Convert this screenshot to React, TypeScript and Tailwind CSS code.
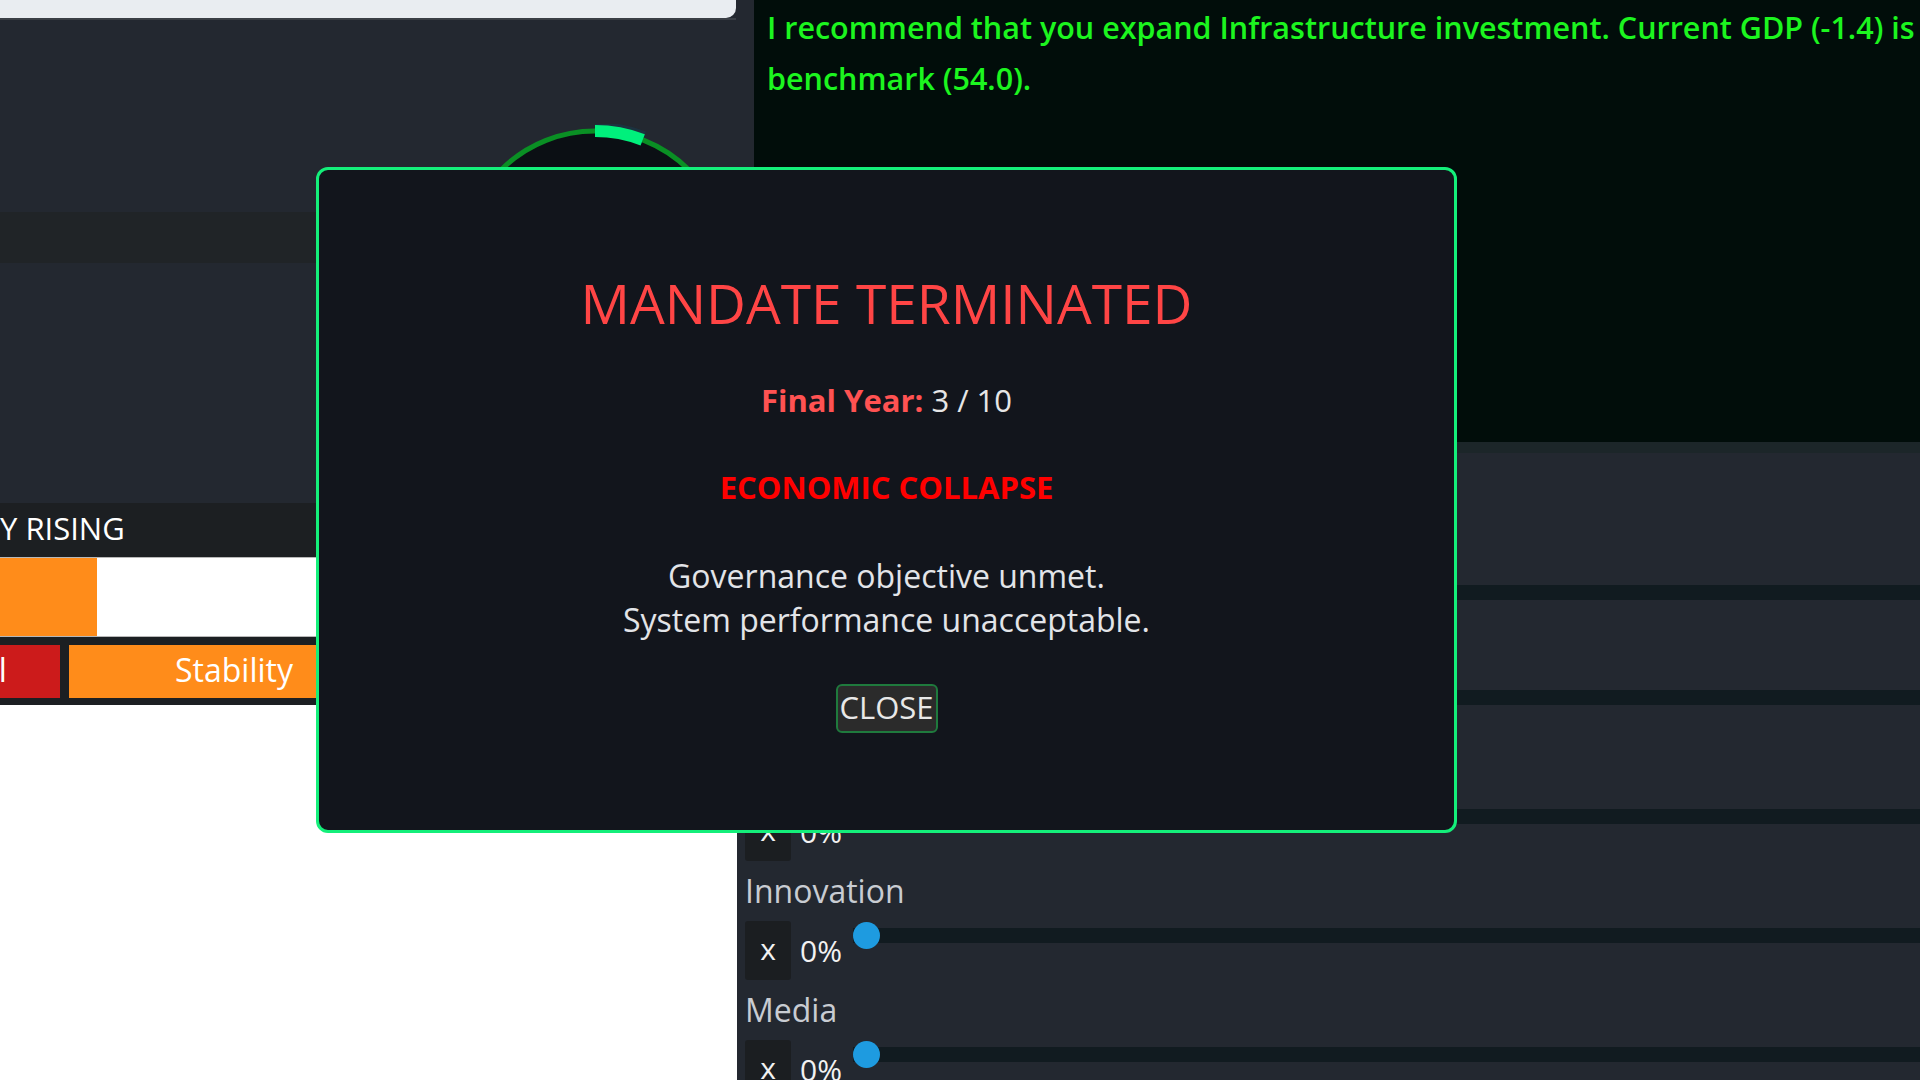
import clsx from "clsx";

interface SliderProps {
  label: string;
  short?: boolean;
}

function PolicySlider({ label, short }: SliderProps) {
  return (
    <div className="flex flex-col">
      <div className="h-[40px] leading-[40px] text-[32px] text-[#c8ccd2]">{label}</div>
      <div className={clsx("mt-[10px] mb-[10px] flex items-start", short ? "h-[45px]" : "h-[59px]")}>
        <div className="w-[46px] h-full flex items-center justify-center bg-[#1b1e21] rounded-[3px] text-[30px] leading-none text-[#f2f2f2] pb-[4px]">
          x
        </div>
        <div className="h-full flex items-center ml-[9px] text-[30px] leading-none text-[#f2f2f2]">0%</div>
        {/* track */}
        <div className="relative flex-1 ml-[11px] h-[29px] flex items-center">
          <div className="w-full h-[15px] bg-[#111b20]" />
          <div className="absolute left-0 top-[1px] w-[27px] h-[27px] rounded-full bg-[#1e9be0]" />
        </div>
      </div>
    </div>
  );
}

function Gauge() {
  return (
    <svg
      className="absolute left-[455px] top-[124px] w-[280px] h-[280px]"
      viewBox="0 0 280 280"
      fill="none"
    >
      <circle cx="140" cy="140" r="133" fill="#0b0f14" stroke="#0a8f24" strokeWidth="5" />
      <path d="M140 5 A135 135 0 0 1 188.4 14" stroke="#17394a" strokeWidth="14" opacity="0.6" />
      <path d="M140 7 A133 133 0 0 1 187.7 15.8" stroke="#00f07c" strokeWidth="12" />
    </svg>
  );
}

export default function App() {
  return (
    <div className="relative w-[1920px] h-[1080px] overflow-hidden flex bg-[#232830] font-['Open_Sans',sans-serif]">
      {/* Left column */}
      <div className="w-[737px] shrink-0 flex flex-col">
        <div className="h-[18px] w-[736px] bg-[#e9edf1] rounded-br-[10px]" />
        <div className="h-[2px] w-[736px] bg-[#3a3f46]" />
        <div className="h-[192px] bg-[#232830]" />
        <div className="h-[51px] bg-[#202427]" />
        <div className="h-[240px] bg-[#232830]" />

        <div className="h-[52px] bg-[#1c1f22] flex items-center text-[31px] leading-none text-white">
          <span className="pb-[2px]">Y RISING</span>
        </div>

        <div className="bg-[#1c1f22] pt-[2px] pb-[7px] flex flex-col">
          <div className="h-[80px] flex border-y border-[#b8b8b8]">
            <div className="w-[97px] bg-[#ff8c1a]" />
            <div className="flex-1 bg-white" />
          </div>
          <div className="mt-[8px] h-[53px] flex gap-[9px]">
            <div className="w-[60px] bg-[#cc1b1b] overflow-hidden flex items-center">
              <span className="-ml-[104px] text-[32px] leading-none text-white whitespace-nowrap pb-[3px]">Control</span>
            </div>
            <div className="w-[330px] bg-[#ff8c1a] flex items-center justify-center text-[32px] leading-none text-white pb-[3px]">
              Stability
            </div>
          </div>
        </div>

        <div className="flex-1 bg-white" />
      </div>

      {/* Right column */}
      <div className="flex-1 min-w-0 flex flex-col bg-[#232830]">
        <div className="pl-[17px] h-[442px] shrink-0">
          <div className="h-full bg-[#010d0a] pl-[13px] pt-[2px] text-[30.5px] leading-[51px] font-semibold text-[#1cf51f] whitespace-nowrap overflow-hidden">
            <div>I recommend that you expand Infrastructure investment. Current GDP (-1.4) is</div>
            <div>benchmark (54.0).</div>
          </div>
        </div>
        <div className="h-[11px] shrink-0 bg-[#1c2629]" />
        <div className="pl-[8px] pt-[75px] flex flex-col">
          <PolicySlider label="Infrastructure" short />
          <PolicySlider label="Welfare" />
          <PolicySlider label="Defense" />
          <PolicySlider label="Innovation" />
          <PolicySlider label="Media" />
        </div>
      </div>

      <Gauge />

      {/* Game over modal */}
      <div className="absolute left-[316px] top-[167px] w-[1141px] h-[666px] rounded-[12px] border-[3px] border-[#14ef7a] bg-[#12151c] flex flex-col items-center text-center">
        <div className="mt-[101px] h-[64px] leading-[64px] text-[55px] text-[#ff4545]">MANDATE TERMINATED</div>
        <div className="mt-[45px] h-[40px] leading-[40px] text-[31px] text-[#e6e6e6]">
          <span className="font-bold text-[#ff5252]">Final Year:</span> 3 / 10
        </div>
        <div className="mt-[47px] h-[40px] leading-[40px] text-[31px] font-bold text-[#ff0000]">ECONOMIC COLLAPSE</div>
        <div className="mt-[47px] leading-[44px] text-[32px] text-[#e2e4e8]">
          <div>Governance objective unmet.</div>
          <div>System performance unacceptable.</div>
        </div>
        <button className="mt-[42px] w-[102px] h-[49px] flex items-center justify-center rounded-[6px] border-2 border-[#1f7a3d] bg-[#2b2b2b] text-[31px] leading-none text-[#e8e8e8] pb-[2px]">
          CLOSE
        </button>
      </div>
    </div>
  );
}
